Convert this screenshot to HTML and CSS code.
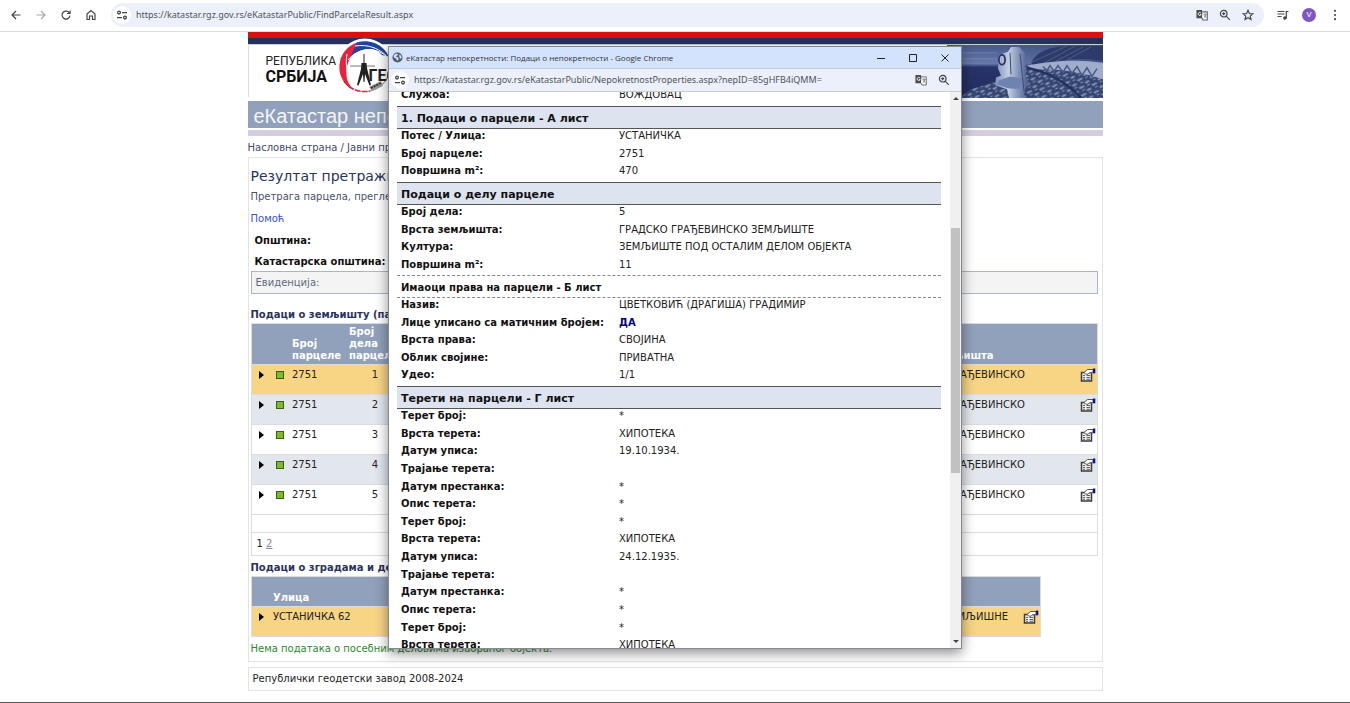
FILE: index.html
```html
<!DOCTYPE html>
<html lang="sr">
<head>
<meta charset="utf-8">
<title>еКатастар непокретности</title>
<link rel="stylesheet" href="styles.css">
</head>
<body>
<svg class="defs" aria-hidden="true">
  <symbol id="i-tune" viewBox="0 0 12 12"><g fill="none" stroke="currentColor" stroke-width="1.3"><circle cx="3" cy="3.6" r="1.4"/><path d="M6 3.6h5M1 8.6h5"/><circle cx="9" cy="8.6" r="1.4"/></g></symbol>
  <symbol id="i-translate" viewBox="0 0 13 12"><path d="M.5.5h6l2.500 8.900H.5z" fill="#4a4d50"/><path d="M7 2.600h5.200v8.800H7.500L6.500 9.300" fill="#fff" stroke="#5f6368"/><path d="M5.500 4A1.700 1.700 0 1 0 5.600 5.500H4.200" fill="none" stroke="#fff" stroke-width=".9"/><path d="M8 5.200h3.500M9.700 4.300v.9M11 5.300c-.3 1.600-1.400 2.900-2.500 3.600M8.800 6.300c.5 1.200 1.400 2 2.400 2.700" fill="none" stroke="#5f6368" stroke-width=".8"/></symbol>
  <symbol id="i-zoom" viewBox="0 0 12 12"><g fill="none" stroke="currentColor" stroke-width="1.200"><circle cx="4.700" cy="4.700" r="3.300"/><path d="M7.200 7.200l3.600 3.600M4.700 3.200v3M3.200 4.700h3"/></g></symbol>
  <symbol id="i-props" viewBox="0 0 16 14"><path d="M1.500 4.500h10v8.500h-10z" fill="#eee" stroke="#3c3c3c" stroke-width="1.500"/><path d="M3 7.500h2M6.500 7.500H10M3 9.500h2M6.500 9.500H10M3 11.300h2M6.500 11.300H10" stroke="#555" stroke-width=".9"/><path d="M4 4.500L7.500 1.500H13v3.200H9.500L8 6.300 5.500 6z" fill="#fff" stroke="#555"/><path d="M13 .5h2.300v4.800H13z" fill="#10109a"/></symbol>
</svg>

<header class="toolbar">
  <nav class="nav">
    <button aria-label="Назад"><svg viewBox="0 0 12 12"><path d="M10.500 6h-8M6 2L2 6l4 4"/></svg></button>
    <button class="off" aria-label="Напред"><svg viewBox="0 0 12 12"><path d="M1.500 6h8M6 2l4 4-4 4"/></svg></button>
    <button aria-label="Учитај поново"><svg viewBox="0 0 12 12"><path d="M9.600 4.200A4 4 0 1 0 10 6.700M10.100 1.500v3H7"/></svg></button>
    <button aria-label="Почетна"><svg viewBox="0 0 12 12"><path d="M2 5l4-3.500L10 5v5.500H7.500V7h-3v3.500H2z"/></svg></button>
  </nav>
  <div class="omnibox">
    <button class="tune" aria-label="Подаци о сајту"><svg><use href="#i-tune"/></svg></button>
    <input class="url" type="text" aria-label="Адреса" value="https://katastar.rgz.gov.rs/eKatastarPublic/FindParcelaResult.aspx">
    <div class="tools">
      <button aria-label="Преведи"><svg><use href="#i-translate"/></svg></button>
      <button aria-label="Увећање"><svg><use href="#i-zoom"/></svg></button>
      <button aria-label="Обележи"><svg viewBox="0 0 12 12"><path d="M6 1.300l1.400 3.200 3.400.3-2.600 2.300.8 3.400L6 8.800 3 10.500l.8-3.400-2.600-2.300 3.400-.3z"/></svg></button>
    </div>
  </div>
  <div class="tools end">
    <button aria-label="Медији"><svg viewBox="0 0 12 12"><path d="M.5 2.500h7M.5 5h7M.5 7.500h4M9.300 9V2.500h2.200"/><circle cx="8" cy="9" r="1.200" fill="currentColor"/></svg></button>
    <button class="avatar" aria-label="Профил">V</button>
    <button aria-label="Мени"><svg viewBox="0 0 12 12"><g fill="currentColor" stroke="none"><circle cx="6" cy="1.800" r="1.100"/><circle cx="6" cy="6" r="1.100"/><circle cx="6" cy="10.200" r="1.100"/></g></svg></button>
  </div>
</header>

<main class="page">
  <div class="banner">
    <div class="flag"></div>
    <div class="brand">
      <div class="country"><span>РЕПУБЛИКА</span><b>СРБИЈА</b></div>
      <svg class="seal" viewBox="0 0 58 58">
        <circle cx="29" cy="29" r="28.500" fill="#fff"/>
        <path d="M17 52A26 26 0 0 1 21 4.500L28 7C15 13 7 29 12 44z" fill="#e8213c"/>
        <path d="M21 4.500A26 26 0 0 1 53 19L46 17C39 9 28 9 15 18z" fill="#1d459b"/>
        <path d="M12 22C22 10 38 8 50 18M11 16C9 27 11 42 20 51M19 8C32 6 45 10 54 22" fill="none" stroke="#fff" stroke-width="1"/>
        <path d="M8 43A25 25 0 0 0 34 53" fill="none" stroke="#e8213c" stroke-width="1.500" stroke-dasharray="6 1"/>
        <path d="M34 53A25 25 0 0 0 53 36" fill="none" stroke="#777" stroke-width="1"/>
        <path d="M14 28h25" stroke="#777" stroke-width="1"/><path d="M28 16v22" stroke="#222" stroke-width="1"/>
        <path d="M25.500 25h5l.5 5 4 17-1.500.5L29 36l-.5 8h-1L27 36l-4.500 11.500L21 47l4-16z" fill="#222"/>
        <path d="M33 49l12-6 2 5-11 5z" fill="#999"/><path d="M35 50l10-5" stroke="#333" stroke-width="2" stroke-dasharray="2 1"/>
      </svg>
      <b class="geo">ГЕОДЕТСКИ</b>
      <svg class="photo" viewBox="0 0 156 54" preserveAspectRatio="none">
        <defs><linearGradient id="sky" x2="0" y2="1"><stop offset="0" stop-color="#46588c"/><stop offset=".35" stop-color="#6679a8"/><stop offset=".42" stop-color="#28336a"/><stop offset="1" stop-color="#222d5e"/></linearGradient>
        <linearGradient id="haze" x2="1"><stop offset="0" stop-color="#46588c" stop-opacity="0"/><stop offset="1" stop-color="#3c4d80"/></linearGradient>
        <linearGradient id="body" x2="1"><stop offset="0" stop-color="#7f90b8"/><stop offset=".4" stop-color="#c3cee2"/><stop offset="1" stop-color="#44578a"/></linearGradient>
        <pattern id="town" width="13" height="8" patternUnits="userSpaceOnUse" patternTransform="rotate(-14)"><path fill="#36456f" d="M0 0h13v8H0z"/><path d="M0 2l5-1 2 1-5 2zM7 6l4-1 2 1-4 2z" fill="#8293ba"/><path d="M3 6l3-1M9 2l3-1" stroke="#a7b5d2" stroke-width=".7"/></pattern></defs>
        <path fill="url(#sky)" d="M0 0h156v54H0z"/>
        <path d="M0 8h50M0 14h50" stroke="#7f90bb" stroke-width=".6"/>
        <path fill="url(#haze)" d="M60 0h96v54H60z"/>
        <path d="M84 18Q92 2 120 1h36v15Q120 10 88 24z" fill="#2c3b69"/>
        <path d="M84 18L120 1M96 19L128 1M108 17L136 2M120 15l24-13" stroke="#5b6d9b" stroke-width=".7"/>
        <path d="M12 54l12-9 28-9 24-14 80 2v30z" fill="url(#town)"/>
        <path d="M80 21q38-8 76-3v17q-34-12-70-10z" fill="#9fadca"/>
        <path d="M96 22l4 4 3-5 4 6 4-6 5 7 4-7 5 8 5-7 5 9 5-8 5 9 5-8" fill="none" stroke="#47598a" stroke-width="1.500"/>
        <path d="M80 23q34 8 54 31" fill="none" stroke="#24315f" stroke-width="2.500"/>
        <path d="M51 24l1-14 9-3 3-5h8l6 6 1 24 3 6-5 10 1 6H62l-2-9-12-4 1-8 5-2z" fill="url(#body)"/>
        <path d="M52 36l11-4 12 2-3 11-11-1-11-4z" fill="#6f83b0"/><path d="M73 9l4 38M63 8l1 22" stroke="#3c4c7b"/>
        <ellipse cx="55" cy="15" rx="4" ry="6" fill="#293664"/><ellipse cx="55" cy="15" rx="2.200" ry="4" fill="#a8b6d2"/>
      </svg>
    </div>
    <h1 class="app">еКатастар непокретности</h1>
    <div class="lilac"></div>
  </div>
  <nav class="crumbs"><a href="#">Насловна страна</a> / <a href="#">Јавни приступ</a></nav>

  <section class="box">
    <h2 class="title">Резултат претраживања</h2>
    <p class="sub">Претрага парцела, преглед података</p>
    <a class="help" href="#">Помоћ</a>
    <p class="field">Општина:</p>
    <p class="field">Катастарска општина:</p>
    <div class="evid">Евиденција:</div>
    <h3>Подаци о земљишту (парцели)</h3>
    <table class="grid land">
      <colgroup><col class="c1"><col class="c2"><col class="c3"><col class="c4"><col><col class="c6"><col class="c7"></colgroup>
      <thead><tr><th></th><th></th><th>Број парцеле</th><th>Број дела парцеле</th><th></th><th>Врста земљишта</th><th></th></tr></thead>
      <tbody>
        <tr class="sel"><td><i class="arrow"></i></td><td><i class="dot"></i></td><td>2751</td><td class="num">1</td><td></td><td>ГРАДСКО ГРАЂЕВИНСКО</td><td><svg class="props"><use href="#i-props"/></svg></td></tr>
        <tr class="alt"><td><i class="arrow"></i></td><td><i class="dot"></i></td><td>2751</td><td class="num">2</td><td></td><td>ГРАДСКО ГРАЂЕВИНСКО</td><td><svg class="props"><use href="#i-props"/></svg></td></tr>
        <tr><td><i class="arrow"></i></td><td><i class="dot"></i></td><td>2751</td><td class="num">3</td><td></td><td>ГРАДСКО ГРАЂЕВИНСКО</td><td><svg class="props"><use href="#i-props"/></svg></td></tr>
        <tr class="alt"><td><i class="arrow"></i></td><td><i class="dot"></i></td><td>2751</td><td class="num">4</td><td></td><td>ГРАДСКО ГРАЂЕВИНСКО</td><td><svg class="props"><use href="#i-props"/></svg></td></tr>
        <tr><td><i class="arrow"></i></td><td><i class="dot"></i></td><td>2751</td><td class="num">5</td><td></td><td>ГРАДСКО ГРАЂЕВИНСКО</td><td><svg class="props"><use href="#i-props"/></svg></td></tr>
        <tr class="blank"><td colspan="7"></td></tr>
        <tr class="pager"><td colspan="7">1 <a href="#">2</a></td></tr>
      </tbody>
    </table>
    <h3>Подаци о зградама и деловима</h3>
    <table class="grid building">
      <colgroup><col class="c1"><col><col class="b3"><col class="c7"></colgroup>
      <thead><tr><th></th><th>Улица</th><th></th><th></th></tr></thead>
      <tbody><tr class="sel"><td><i class="arrow"></i></td><td>УСТАНИЧКА 62</td><td class="use">ЗЕМЉИШНЕ</td><td><svg class="props"><use href="#i-props"/></svg></td></tr></tbody>
    </table>
    <p class="note">Нема података о посебним деловима изабраног објекта.</p>
  </section>
  <footer class="foot">Републички геодетски завод 2008-2024</footer>
</main>

<section class="popup">
  <div class="titlebar">
    <svg class="globe" viewBox="0 0 12 12"><circle cx="6" cy="6" r="5.500" fill="#555b62"/><path d="M2 3.500l2-1.700 2.500.4-.5 1.600-1.500.4.500 1.500 2 .3.300 2-1.800 1.900-.8-2.500L2 6z" fill="#d3e3fd"/><path d="M8 2.500l2 1.500.6 2.500-1.300.8L8 5.500z" fill="#d3e3fd"/></svg>
    <span class="caption">еКатастар непокретности: Подаци о непокретности - Google Chrome</span>
    <button aria-label="Умањи"><svg viewBox="0 0 10 10"><path d="M1 5.500h8"/></svg></button>
    <button aria-label="Увећај"><svg viewBox="0 0 10 10"><path d="M1.500 1.500h7v7h-7z"/></svg></button>
    <button aria-label="Затвори"><svg viewBox="0 0 10 10"><path d="M1.500 1.500l7 7M8.500 1.500l-7 7"/></svg></button>
  </div>
  <div class="address">
    <button class="tune" aria-label="Подаци о сајту"><svg><use href="#i-tune"/></svg></button>
    <input class="url" type="text" aria-label="Адреса прозора" value="https://katastar.rgz.gov.rs/eKatastarPublic/NepokretnostProperties.aspx?nepID=85gHFB4iQMM=">
    <div class="tools">
      <button aria-label="Преведи"><svg><use href="#i-translate"/></svg></button>
      <button aria-label="Увећање"><svg><use href="#i-zoom"/></svg></button>
    </div>
  </div>
  <div class="view">
    <div class="sheet">
      <dl class="r1"><dt>Служба:</dt><dd>ВОЖДОВАЦ</dd></dl>
      <h3>1. Подаци о парцели - А лист</h3>
      <dl class="r3"><dt>Потес / Улица:</dt><dd>УСТАНИЧКА</dd><dt>Број парцеле:</dt><dd>2751</dd><dt>Површина m²:</dt><dd>470</dd></dl>
      <h3>Подаци о делу парцеле</h3>
      <dl class="r4"><dt>Број дела:</dt><dd>5</dd><dt>Врста земљишта:</dt><dd>ГРАДСКО ГРАЂЕВИНСКО ЗЕМЉИШТЕ</dd><dt>Култура:</dt><dd>ЗЕМЉИШТЕ ПОД ОСТАЛИМ ДЕЛОМ ОБЈЕКТА</dd><dt>Површина m²:</dt><dd>11</dd></dl>
      <h4>Имаоци права на парцели - Б лист</h4>
      <dl class="r5"><dt>Назив:</dt><dd>ЦВЕТКОВИЋ (ДРАГИША) ГРАДИМИР</dd><dt>Лице уписано са матичним бројем:</dt><dd class="yes">ДА</dd><dt>Врста права:</dt><dd>СВОЈИНА</dd><dt>Облик својине:</dt><dd>ПРИВАТНА</dd><dt>Удео:</dt><dd>1/1</dd></dl>
      <h3>Терети на парцели - Г лист</h3>
      <dl class="r14"><dt>Терет број:</dt><dd>*</dd><dt>Врста терета:</dt><dd>ХИПОТЕКА</dd><dt>Датум уписа:</dt><dd>19.10.1934.</dd><dt>Трајање терета:</dt><dd></dd><dt>Датум престанка:</dt><dd>*</dd><dt>Опис терета:</dt><dd>*</dd><dt>Терет број:</dt><dd>*</dd><dt>Врста терета:</dt><dd>ХИПОТЕКА</dd><dt>Датум уписа:</dt><dd>24.12.1935.</dd><dt>Трајање терета:</dt><dd></dd><dt>Датум престанка:</dt><dd>*</dd><dt>Опис терета:</dt><dd>*</dd><dt>Терет број:</dt><dd>*</dd><dt>Врста терета:</dt><dd>ХИПОТЕКА</dd></dl>
    </div>
    <div class="bar"><i class="up"></i><div class="track"><div class="thumb"></div></div><i class="down"></i></div>
  </div>
</section>
</body>
</html>
```
FILE: styles.css
```css
* { box-sizing: border-box; }
body { margin: 0; min-height: 100vh; display: flex; flex-direction: column; position: relative; background: #fff; color: #222; font: 10px/14px "DejaVu Sans", sans-serif; }
body::after { content: ""; height: 1px; margin-top: auto; background: #55585f; }
h1, h2, h3, h4, p, dl, dd { margin: 0; }
button { border: 0; padding: 0; background: none; display: flex; align-items: center; justify-content: center; color: #44474a; }
a { color: inherit; text-decoration: none; }
svg { display: block; flex: none; }
.defs { position: absolute; width: 0; height: 0; }

.toolbar { height: 32px; padding: 0 10px 1px; display: flex; align-items: center; border-bottom: 1px solid #dcdcdc; }
.toolbar svg { width: 12px; height: 12px; fill: none; stroke: currentColor; stroke-width: 1.2; }
.toolbar .tools svg:has(use), .address .tools svg, .toolbar .tune svg { stroke: none; }
.nav { display: flex; gap: 13px; margin-right: 14px; }
.nav .off { color: #a5a8ab; }
.omnibox { flex: 1; height: 24px; border-radius: 12px; background: #ebf0fa; display: flex; align-items: center; padding: 0 10px 0 2px; }
.tune { width: 18px; height: 18px; border-radius: 50%; background: #fff; }
.tune svg { width: 12px; height: 12px; }
.url { flex: 1; min-width: 0; border: 0; padding: 0; background: none; outline: 0; color: #50555a; font: 9px/14px "Noto Sans", sans-serif; }
.omnibox .url { margin-left: 5px; }
.tools { display: flex; align-items: center; gap: 11px; }
.tools svg { width: 12px; height: 12px; }
.tools.end { gap: 13px; margin-left: 13px; }
.toolbar .tools.end { margin-right: -1px; }
.avatar { width: 14px; height: 14px; border-radius: 50%; background: #7e57c2; color: #fff; font: 8px/14px Roboto, sans-serif; }

.page { width: 100%; max-width: 855px; margin: 0 auto; }
.flag { height: 12px; background: #26315e; border-top: 6px solid #d9110b; }
.brand { height: 53px; display: flex; align-items: flex-start; padding-left: 17px; border-left: 1px solid #ddd; border-top: 1px solid #ccd0d8; }
.country { width: 71px; padding-top: 9px; display: flex; flex-direction: column; color: #222; font: 12px/15px Roboto, sans-serif; }
.country b { font: bold 16px/16px Roboto, sans-serif; color: #111; }
.seal { width: 58px; height: 58px; margin: -7px 0 0 -1px; }
.geo { margin: 21px 0 0 -25px; font: bold 16px/20px Roboto, sans-serif; color: #222; z-index: 1; }
.photo { width: 156px; height: 53px; margin-left: auto; }
.app { margin-top: 4px; padding-left: 6px; height: 27px; background: #91a0bb; color: #f3f5f8; font: 20px/30px "Liberation Sans", sans-serif; }
.lilac { height: 6px; margin-top: 2px; background: #d5cce0; }
.crumbs { padding-top: 5px; height: 21px; color: #44496a; }
.box { border: 1px solid #e3e3e3; padding: 9px 4px 5px 2px; }
.title { color: #27335c; font-size: 14px; font-weight: 400; line-height: 18px; }
.sub { margin-top: 5px; color: #4a5068; }
.help { display: block; margin-top: 8px; color: #3a4fd0; }
.field { margin: 8px 0 0 4px; color: #111; font-weight: 700; }
.field + .field { margin-top: 7px; }
.evid { margin-top: 2px; height: 23px; padding: 0 4px; border: 1px solid #a9b6ca; background: #f4f4f4; color: #5b6b80; line-height: 21px; }
.box h3 { color: #27335c; font-size: 10px; line-height: 14px; }
.evid + h3 { margin-top: 14px; }
.grid { table-layout: fixed; border-collapse: collapse; border: 1px solid #dcdcdc; }
.grid + h3 { margin-top: 5px; }
.land { width: 100%; margin-top: 1px; }
.building { width: 790px; margin-top: 1px; }
.grid th { height: 41px; padding: 0 4px 2px 0; background: #91a0bb; color: #fff; font-size: 10px; line-height: 12px; text-align: left; vertical-align: bottom; }
.grid.building th { height: 30px; }
.grid td { height: 30px; padding: 3px 0 0; line-height: 14px; vertical-align: top; border-top: 1px solid #dcdcdc; color: #222; white-space: nowrap; }
.c1 { width: 22px; } .c2 { width: 19px; } .c3 { width: 57px; } .c4 { width: 40px; } .c6 { width: 184px; } .c7 { width: 17px; } .b3 { width: 100px; }
.grid .num { text-align: right; padding-right: 11px; }
.grid .use { text-align: right; padding-right: 15px; }
.grid .blank td { height: 18px; }
.grid .pager td { height: 23px; padding: 4px 5px; }
.pager a { color: #888; text-decoration: underline; }
.sel td { background: #f8d485; }
.alt td { background: #e2e7ee; }
.arrow { display: block; margin: 3px 0 0 7px; width: 5px; border: 4px solid transparent; border-left: 5px solid #000; border-right: 0; }
.dot { display: block; margin: 3px 0 0 3px; width: 8px; height: 8px; background: #7cbd26; border: 1px solid #3f5a20; }
.props { width: 16px; height: 14px; }
.note { margin-top: 5px; color: #2b8a2b; }
.foot { margin-top: 5px; height: 24px; padding: 0 4px; border: 1px solid #e3e3e3; line-height: 22px; }

.popup { position: absolute; left: calc(50% - 287px); top: 46px; width: 574px; height: 603px; z-index: 2; display: flex; flex-direction: column; background: #fff; border: 1px solid #858a92; box-shadow: 0 4px 12px rgba(0, 0, 0, .45); }
.titlebar { height: 21px; padding: 0 11px 0 3px; display: flex; align-items: center; background: #d3e3fd; }
.globe { width: 11px; height: 11px; }
.caption { flex: 1; margin-left: 3px; color: #333; font: 8px/14px "Open Sans", sans-serif; }
.titlebar button { margin-left: 22px; }
.titlebar button svg { width: 10px; height: 10px; fill: none; stroke: #222; }
.address { height: 24px; padding: 0 11px 0 2px; display: flex; align-items: center; background: #ebf0fa; border-top: 1px solid #c3cad6; border-bottom: 1px solid #ccc; }
.address .url { margin-left: 5px; }
.view { flex: 1; min-height: 0; display: flex; overflow: hidden; }
.sheet { flex: 1; margin: -4px 9px 0 8px; color: #111; }
.sheet h3 { height: 23px; padding: 2px 4px 0; background: #dde3ef; border: solid #555; border-width: 1px 0; font-size: 11px; line-height: 20px; }
.sheet h4 { height: 23px; padding: 2px 4px 0; border: dashed #888; border-width: 1px 0; font-size: 10px; line-height: 20px; }
.sheet dl { padding: 0 4px; display: grid; grid-template-columns: 218px 1fr; grid-auto-rows: 1fr; line-height: 14px; }
.sheet dt { font-weight: 700; }
.sheet dd { color: #222; white-space: nowrap; }
.sheet .yes { color: #000080; font-weight: 700; }
.r1 { height: 18px; } .r3 { height: 53px; } .r4 { height: 70px; } .r5 { height: 88px; } .r14 { height: 247px; }
.bar { width: 11px; display: flex; flex-direction: column; align-items: center; background: #f0f0f0; }
.up, .down { margin: 5px 0; border: 3px solid transparent; }
.up { border-bottom-color: #444; border-top: 0; }
.down { border-top-color: #444; border-bottom: 0; }
.track { flex: 1; width: 9px; display: grid; grid-template-rows: 123fr 245fr 162fr; }
.thumb { grid-row: 2; background: #c1c1c1; }
```
